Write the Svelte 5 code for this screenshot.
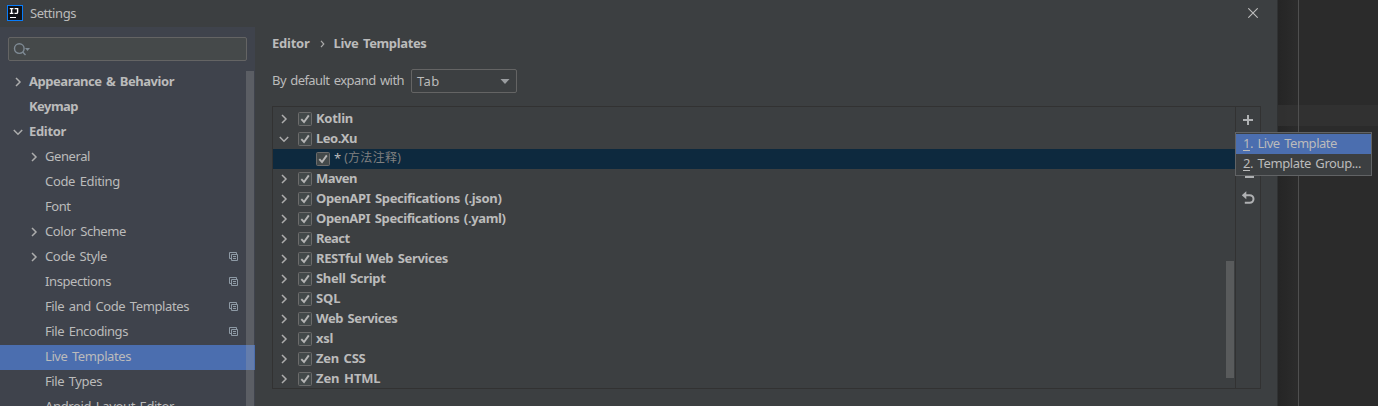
<script>
  const nav = [
    { label: 'Appearance & Behavior', w: 145, top: true, arrow: 'right' },
    { label: 'Keymap', w: 49, top: true },
    { label: 'Editor', w: 37, top: true, arrow: 'down' },
    { label: 'General', w: 45, arrow: 'right' },
    { label: 'Code Editing', w: 75 },
    { label: 'Font', w: 25.5 },
    { label: 'Color Scheme', w: 81, arrow: 'right' },
    { label: 'Code Style', w: 62, arrow: 'right', copy: true },
    { label: 'Inspections', w: 66, copy: true },
    { label: 'File and Code Templates', w: 144, copy: true },
    { label: 'File Encodings', w: 83, copy: true },
    { label: 'Live Templates', w: 86, selected: true },
    { label: 'File Types', w: 57 },
    { label: 'Android Layout Editor', w: 129 }
  ];
  const groups = [
    { label: 'Kotlin', w: 37 },
    { label: 'Leo.Xu', w: 41, open: true },
    { label: '*', note: '(方法注释)', child: true },
    { label: 'Maven', w: 41 },
    { label: 'OpenAPI Specifications (.json)', w: 185.5 },
    { label: 'OpenAPI Specifications (.yaml)', w: 189.5 },
    { label: 'React', w: 33.5 },
    { label: 'RESTful Web Services', w: 132 },
    { label: 'Shell Script', w: 69.5 },
    { label: 'SQL', w: 24.5 },
    { label: 'Web Services', w: 81.5 },
    { label: 'xsl', w: 17 },
    { label: 'Zen CSS', w: 49.5 },
    { label: 'Zen HTML', w: 64.5 }
  ];

  // Spreads a label's letters so that it takes the given advance width.
  function fit(node, width) {
    if (!width) return;
    node.style.letterSpacing = '0px';
    const natural = node.getBoundingClientRect().width;
    node.style.letterSpacing = (width - natural) / node.textContent.length + 'px';
  }
</script>

{#snippet chevron(down)}
  <svg class="chev" width="10" height="10" viewBox="0 0 10 10">
    <path d={down ? 'M.8 3 5 7.2 9.2 3' : 'M3 1 7 5 3 9'} />
  </svg>
{/snippet}

{#snippet check()}
  <svg class="check" width="14" height="14" viewBox="0 0 14 14">
    <rect x=".5" y=".5" width="13" height="13" rx="1" />
    <path d="M3.3 7.2 6 10 10.8 3.4" />
  </svg>
{/snippet}

<div class="screen">
  <div class="dialog">
    <header class="titlebar">
      <svg width="16" height="16" viewBox="0 0 16 16">
        <rect width="16" height="16" fill="#087cfa" />
        <rect x="1" y="1" width="14" height="14" fill="#101216" />
        <path d="M2.8 3.6H6.4M4.6 3.6V8.4M2.8 8.4H6.4M7.6 3.6H10.6V7.2Q10.6 8.4 9.3 8.4H7.5" fill="none" stroke="#fff" stroke-width="1.4" />
        <rect x="3" y="12" width="6" height="1" fill="#fff" />
      </svg>
      <span class="title"><span use:fit={46}>Settings</span></span>
      <svg class="close" width="10" height="10" viewBox="0 0 10 10"><path d="M.3.3 9.7 9.7M9.7.3.3 9.7" /></svg>
    </header>

    <div class="body">
      <aside class="sidebar">
        <div class="search">
          <svg width="18" height="14" viewBox="0 0 18 14">
            <circle cx="6.3" cy="5.6" r="4.8" />
            <path d="M9.7 9.1 12.5 12.1" />
            <path class="solid" d="M12 5h5L14.5 8Z" />
          </svg>
        </div>
        <nav>
          {#each nav as item}
            <div class="item" class:top={item.top} class:selected={item.selected}>
              <span class="slot">{#if item.arrow}{@render chevron(item.arrow === 'down')}{/if}</span>
              <span class="label"><span use:fit={item.w}>{item.label}</span></span>
              {#if item.copy}
                <svg class="copy" width="10" height="10" viewBox="0 0 10 10">
                  <path d="M2 6.5H.5V.5H7.5V2M2.5 2.5h6v6h-6ZM4 4.5h3M4 6.5h3" />
                </svg>
              {/if}
            </div>
          {/each}
          <i class="thumb"></i>
        </nav>
      </aside>

      <main>
        <div class="crumbs">
          <span use:fit={37.5}>Editor</span>
          <svg width="5" height="8" viewBox="0 0 5 8"><path d="M1 .8 3.8 4 1 7.2" /></svg>
          <span use:fit={93}>Live Templates</span>
        </div>
        <div class="expand">
          <span class="caption"><span use:fit={132}>By default expand with</span></span>
          <div class="select">
            <span use:fit={22.5}>Tab</span>
            <svg width="10" height="5" viewBox="0 0 10 5"><path d="M.5 0h9L5 5Z" /></svg>
          </div>
        </div>

        <div class="table">
          <div class="rows">
            {#each groups as g}
              <div class="row" class:child={g.child}>
                {#if !g.child}{@render chevron(g.open)}{/if}
                {@render check()}
                <span class="name"><span use:fit={g.w}>{g.label}</span></span>
                {#if g.note}<span class="note"><span use:fit={57}>{g.note}</span></span>{/if}
              </div>
            {/each}
            <i class="thumb"></i>
          </div>
          <div class="tools">
            <svg width="16" height="16" viewBox="0 0 16 16"><path d="M8 3v10M3 8h10" /></svg>
            <svg class="minus" width="16" height="16" viewBox="0 0 16 16"><path d="M4 8h9" /></svg>
            <svg width="16" height="16" viewBox="0 0 16 16">
              <path d="M4 5.2H9.7A3.7 3.7 0 0 1 9.7 12.8H4.8" />
              <path class="solid" d="M1.8 5.2 6.3 1.2V9.2Z" />
            </svg>
          </div>
        </div>
      </main>
    </div>
  </div>

  <div class="code">
    <div class="caret"></div>
    <div class="margin"></div>
  </div>

  <div class="popup">
    <div class="option active"><span use:fit={94}><u>1</u>. Live Template</span></div>
    <div class="option"><span use:fit={118}><u>2</u>. Template Group...</span></div>
  </div>
</div>

<style>
  .screen {
    position: relative;
    display: flex;
    width: 1378px;
    height: 406px;
    overflow: hidden;
    background: #2b2b2b;
    color: #bbb;
    font: 13px/20px "Noto Sans", "Noto Sans CJK SC", sans-serif;
    word-spacing: 1.5px;
    white-space: nowrap;
  }
  svg { flex: none; display: block; }
  .dialog {
    box-sizing: border-box;
    width: 1278px;
    height: 406px;
    display: flex;
    flex-direction: column;
    background: #3c3f41;
    border-right: 1px solid #303233;
  }
  .titlebar {
    height: 27px;
    flex: none;
    display: flex;
    align-items: center;
    padding: 0 19px 1px 7px;
    box-sizing: border-box;
  }
  .title { flex: 1; padding-left: 7px; }
  .close { fill: none; stroke: #bdbdbd; stroke-width: 1.1; }
  .body { display: flex; flex: 1; min-height: 0; }
  .sidebar { width: 255px; background: #3f434c; overflow: hidden; flex: none; }
  .search {
    box-sizing: border-box;
    width: 239px;
    height: 24px;
    margin: 10px 8px 9px;
    border: 1px solid #646464;
    border-radius: 2px;
    background: #45494a;
    padding: 5px 4px;
  }
  .search svg { fill: none; stroke: #7f8b95; stroke-width: 1.4; }
  .search .solid { fill: #7f8b95; stroke: none; }
  nav { position: relative; }
  .item {
    box-sizing: border-box;
    height: 25px;
    display: flex;
    align-items: center;
    padding: 0 16px 1px 29px;
  }
  .item.top { padding-left: 13px; font-weight: 700; }
  .slot { width: 16px; flex: none; }
  .label { flex: 1; padding-bottom: 2px; }
  .selected { background: #4b6eaf; }
  .copy { fill: none; stroke: #8e9aa5; stroke-width: 1; }
  .chev { fill: none; stroke: #adadad; stroke-width: 1.5; }
  nav .thumb {
    position: absolute;
    left: 246px;
    top: 1px;
    width: 8px;
    height: 400px;
    background: rgba(166, 166, 166, .28);
  }
  main { flex: 1; padding: 6px 16px 0 17px; }
  .crumbs { display: flex; align-items: center; height: 20px; font-weight: 700; }
  .crumbs svg { margin: 2px 9px 0 10px; fill: none; stroke: #aaa; stroke-width: 1.2; }
  .expand { display: flex; align-items: center; margin-top: 16px; height: 24px; }
  .caption { width: 139px; padding-bottom: 2px; }
  .select {
    box-sizing: border-box;
    width: 106px;
    height: 24px;
    border: 1px solid #646464;
    border-radius: 2px;
    display: flex;
    align-items: center;
    justify-content: space-between;
    padding: 0 6px 0 5px;
  }
  .select svg { fill: #9a9da0; margin-top: 1px; }
  .table {
    box-sizing: border-box;
    width: 989px;
    height: 283px;
    margin-top: 13px;
    border: 1px solid #323232;
    display: flex;
  }
  .rows { position: relative; flex: 1; padding-top: 2px; }
  .row { display: flex; align-items: center; height: 20px; padding-left: 6px; }
  .row .check { margin: 0 4px 0 9px; }
  .row .name { font-weight: 700; }
  .row .name, .row .note { padding-bottom: 2px; }
  .child { background: #0d293e; padding-left: 34px; }
  .child .name { font-weight: 400; }
  .row .note { color: #808080; margin-left: 3px; font-size: 12px; }
  .check { fill: #43494a; stroke: #6b6b6b; }
  .check path { fill: none; stroke: #b5b5b5; stroke-width: 1.9; }
  .rows .thumb {
    position: absolute;
    right: 1px;
    top: 154px;
    width: 8px;
    height: 117px;
    background: #595b5c;
  }
  .tools {
    width: 24px;
    border-left: 1px solid #323232;
    display: flex;
    flex-direction: column;
    align-items: center;
    padding-top: 5px;
    box-sizing: content-box;
  }
  .tools svg { fill: none; stroke: #afb1b3; stroke-width: 2; }
  .tools .solid { fill: #afb1b3; stroke: none; }
  .tools .minus { position: relative; margin: 41px 0 5px; left: 1px; }
  .code {
    flex: 1;
    position: relative;
    background: linear-gradient(90deg, #252525, #2b2b2b 18px);
    padding-top: 105px;
  }
  .caret { height: 21px; background: #323232; opacity: .9; }
  .margin { position: absolute; left: 20px; top: 0; width: 1px; height: 406px; background: #4f4f4f; }
  .popup {
    position: absolute;
    left: 1235px;
    top: 132px;
    box-sizing: border-box;
    width: 137px;
    height: 44px;
    border: 1px solid #616365;
    background: #3c3f41;
    padding: 1px 0;
  }
  .option { box-sizing: border-box; height: 20px; padding-left: 7px; line-height: 18px; }
  .active { background: #4b6eaf; }
  u { text-underline-offset: 2px; }
</style>
